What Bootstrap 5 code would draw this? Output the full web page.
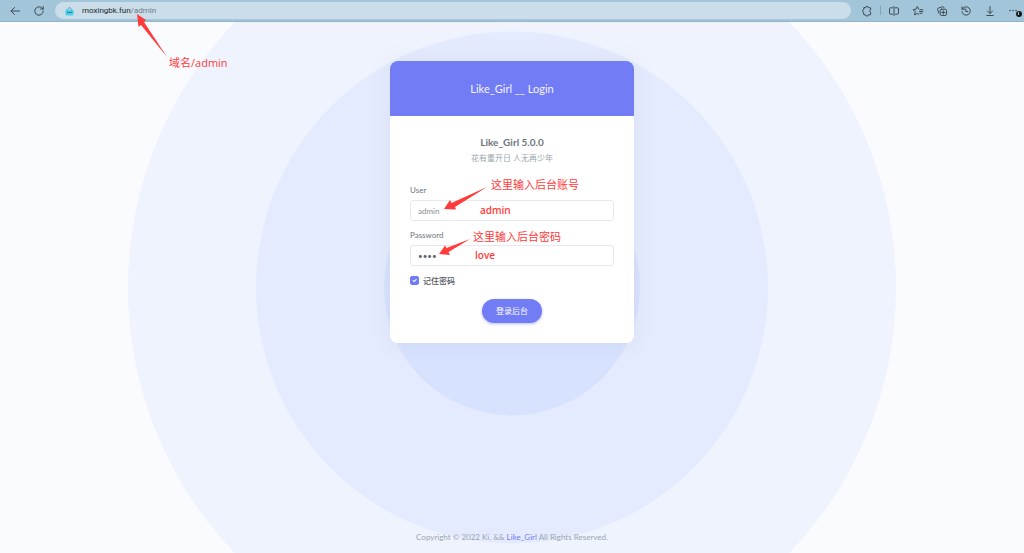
<!DOCTYPE html>
<html lang="zh-CN">
<head>
<meta charset="utf-8">
<meta name="viewport" content="width=device-width, initial-scale=1">
<title>Like_Girl Login</title>
<link href="https://cdn.jsdelivr.net/npm/bootstrap@5.3.0/dist/css/bootstrap.min.css" rel="stylesheet">
<style>
:root { --brand: #727cf5; --note: #ff3b3b; }
body { font-family: Lato, "Noto Sans CJK SC", sans-serif; font-size: 8px; line-height: 12px; color: #6c757d; background: #fafbfe; }
/* browser bar */
.browser-bar { height: 22px; background: #a3c5da; border-bottom: 1px solid #94b4c6; color: #3b4a55; padding: 0 4px 0 9px; font-family: Roboto, sans-serif; }
.bar-nav { gap: 12px; margin-right: 10px; }
.bar-btn { width: 12px; height: 12px; padding: 0; border: 0; background: none; color: inherit; display: flex; flex: none; position: relative; }
.bar-btn svg, .site-icon { width: 100%; height: 100%; fill: none; stroke: currentColor; stroke-width: 1; stroke-linecap: round; stroke-linejoin: round; overflow: visible; }
.address { height: 17px; background: #cadde8; border-radius: 9px; padding: 0 10px; color: #6c7c87; }
.address .host { color: #20282e; }
.address .site-icon { width: 9px; height: 10px; margin-right: 8px; }
.bar-tools { gap: 12px; margin-left: 10px; }
.bar-rule { width: 1px; height: 9px; background: #84a3b5; margin: 0 -5px; }
.alert-dot { position: absolute; right: -2px; bottom: 0; width: 6px; height: 6px; border-radius: 50%; background: #15191c; }
.alert-dot::after { content: ""; position: absolute; left: 2px; top: 1px; width: 1px; height: 3px; background: #a3c5da; }
/* backdrop */
.rings { position: absolute; inset: 0; width: 100%; height: 100%; z-index: -1; }
.ring-l { r: 37.5vw; fill: #eff3fe; }
.ring-m { r: 25vw; fill: #e5ebfe; }
.ring-s { r: 12.5vw; fill: #d7e2fe; }
/* login card */
.login-card { width: 244px; border: 0; border-radius: 8px; margin-top: 39px; box-shadow: 0 0 19px rgba(154,161,171,.15); }
.login-head { background: var(--brand); color: #f4f5ff; font-size: 11px; height: 55px; border-radius: 8px 8px 0 0; }
.login-body { padding: 20px; }
.login-title { font-size: 10px; line-height: 12px; font-weight: 700; margin-bottom: 4px; }
.login-sub { color: #98a6ad; margin-bottom: 20px; }
.login-body .form-label { display: block; margin-bottom: 4px; }
.login-body .form-control { height: 21px; padding: 0 7px; font-size: 8px; line-height: 12px; border-color: #e6e9ed; border-radius: 3px; color: #87919a; }
.login-body input[type=password] { color: #5c656d; }
.field { margin-bottom: 8px; }
.remember { gap: 4px; height: 13px; margin-bottom: 12px; color: #4f575f; font-weight: 500; }
.remember .form-check-input { width: 9px; height: 9px; margin: 0; border-radius: 2px; }
.remember .form-check-input:checked { background-color: var(--brand); border-color: var(--brand); }
.btn-login { height: 24px; padding: 0 14px; font-size: 8px; line-height: 12px; border: 0; border-radius: 12px; color: #fff; background: var(--brand); box-shadow: 0 1px 3px rgba(114,124,245,.5); }
.site-footer { color: #98a6ad; padding-bottom: 10px; }
.site-footer a { color: var(--brand); text-decoration: none; }
/* red annotations laid over the page */
.note { position: absolute; color: var(--note); font-family: "Open Sans", "Noto Sans CJK SC", sans-serif; font-size: 11px; line-height: 14px; white-space: nowrap; }
.note-value { font-weight: 600; font-size: 10px; }
.note-arrow { position: absolute; fill: var(--note); }
.note-user { left: 101px; top: 117px; }
.note-admin { left: 90px; top: 142px; }
.note-pass { left: 83px; top: 169px; }
.note-love { left: 85px; top: 187px; }
.note-domain { left: 169px; top: 56px; }
.arrow-user { left: 54px; top: 126px; }
.arrow-pass { left: 49px; top: 178px; }
.arrow-domain { left: 137px; top: 14px; }
</style>
</head>
<body class="d-flex flex-column min-vh-100 position-relative">
<header class="browser-bar d-flex align-items-center">
  <div class="bar-nav d-flex">
    <button class="bar-btn" aria-label="Back"><svg viewBox="0 0 12 12"><path d="M10.500 6H2M5.500 2.500 2 6l3.500 3.500"/></svg></button>
    <button class="bar-btn" aria-label="Reload"><svg viewBox="0 0 12 12"><path d="M10.200 6A4.200 4.200 0 1 1 8.800 2.900L10.200 4M10.200 1.500V4H7.700"/></svg></button>
  </div>
  <div class="address d-flex align-items-center flex-grow-1">
    <svg class="site-icon" viewBox="0 0 10 10"><path d="M2 4 5 .8 8 4" stroke="#5b8fc0"/><rect x="1" y="4" width="8" height="5.500" rx="1" fill="#46d2ee" stroke="#46d2ee"/><path d="M2.500 6.500h5" stroke="#49628c"/></svg>
    <span><span class="host">moxingbk.fun</span>/admin</span>
  </div>
  <div class="bar-tools d-flex align-items-center">
    <button class="bar-btn" aria-label="Extensions"><svg viewBox="0 0 12 12"><path d="M3.200 2.700h1.500a1.300 1.300 0 0 1 2.600 0h1.900q.5 0 .5.500v1.500a1.400 1.400 0 0 0 0 2.700v1.900q0 .5-.5.5H7.300a1.300 1.300 0 0 1-2.600 0H3.200q-.5 0-.5-.5V7.600a1.500 1.500 0 0 1 0-2.900V3.200q0-.5.500-.5z"/></svg></button>
    <span class="bar-rule"></span>
    <button class="bar-btn" aria-label="Split screen"><svg viewBox="0 0 12 12"><path d="M4.500 2.800H2.500q-1 0-1 1v4.400q0 1 1 1h2M7.500 2.800h2q1 0 1 1v4.400q0 1-1 1h-2M6 1.500v9"/></svg></button>
    <button class="bar-btn" aria-label="Favorites"><svg viewBox="0 0 12 12"><path d="M6.800 4.200 5.300 1.500 4 4.200l-2.800.5 2 2-.5 3.200 2.600-1.400 1.400.7M8 4.700h2.800M7.500 6.500h3.300M8 8.300h2"/></svg></button>
    <button class="bar-btn" aria-label="Collections"><svg viewBox="0 0 12 12"><rect x="4.200" y="4.200" width="6.300" height="6.300" rx="1.300"/><path d="M7.350 5.800v3.200M5.750 7.400h3.200M2.800 8.200 1.600 4.400q-.3-1 .7-1.300L6.600 1.700q1-.2 1.400.8"/></svg></button>
    <button class="bar-btn" aria-label="History"><svg viewBox="0 0 12 12"><path d="M2 1.800V4.200h2.500M2.300 4a4.200 4.200 0 1 1-.4 2.800M5.800 4v2.500h1.900"/></svg></button>
    <button class="bar-btn" aria-label="Downloads"><svg viewBox="0 0 12 12"><path d="M6 1.500v7M3.500 6 6 8.500 8.500 6M2.800 10.500h6.400"/></svg></button>
    <button class="bar-btn" aria-label="Settings"><svg viewBox="0 0 12 12"><path d="M2 5.500h.1M5 5.500h.1M8 5.500h.1" stroke-width="1.500"/></svg><span class="alert-dot"></span></button>
  </div>
</header>
<main class="flex-grow-1 d-flex flex-column align-items-center position-relative z-0">
  <svg class="rings" aria-hidden="true"><circle class="ring-l" cx="50%" cy="50%"/><circle class="ring-m" cx="50%" cy="50%"/><circle class="ring-s" cx="50%" cy="50%"/></svg>
  <section class="card login-card">
    <div class="login-head d-flex align-items-center justify-content-center">Like_Girl __ Login</div>
    <form class="login-body" onsubmit="return false">
      <h4 class="login-title text-center">Like_Girl 5.0.0</h4>
      <p class="login-sub text-center">花有重开日 人无再少年</p>
      <div class="field">
        <label class="form-label" for="user">User</label>
        <input class="form-control" id="user" type="text" value="admin">
      </div>
      <div class="field">
        <label class="form-label" for="password">Password</label>
        <input class="form-control" id="password" type="password" value="love">
      </div>
      <div class="remember d-flex align-items-center">
        <input class="form-check-input" type="checkbox" id="remember" checked>
        <label for="remember">记住密码</label>
      </div>
      <div class="d-flex justify-content-center"><button class="btn btn-login" type="submit">登录后台</button></div>
    </form>
    <span class="note note-user">这里输入后台账号</span>
    <span class="note note-value note-admin">admin</span>
    <span class="note note-pass">这里输入后台密码</span>
    <span class="note note-value note-love">love</span>
    <svg class="note-arrow arrow-user" width="44" height="24" viewBox="0 0 44 24"><path d="M0 22 6 13l1.500 3L43 0 11 20l1 2.500z"/></svg>
    <svg class="note-arrow arrow-pass" width="32" height="18" viewBox="0 0 32 18"><path d="M0 15 6 6.500l1.500 2.500L31 0 9.500 13l1.500 3z"/></svg>
  </section>
  <footer class="site-footer mt-auto text-center">Copyright © 2022 Ki. &amp;&amp; <a href="#">Like_Girl</a> All Rights Reserved.</footer>
</main>
<svg class="note-arrow arrow-domain" width="31" height="44" viewBox="0 0 31 44"><path d="M0 0 9 6 7 8 30 43 4 11l-2.500 2z"/></svg>
<span class="note note-domain">域名/admin</span>
<script src="https://cdn.jsdelivr.net/npm/bootstrap@5.3.0/dist/js/bootstrap.bundle.min.js"></script>
</body>
</html>
